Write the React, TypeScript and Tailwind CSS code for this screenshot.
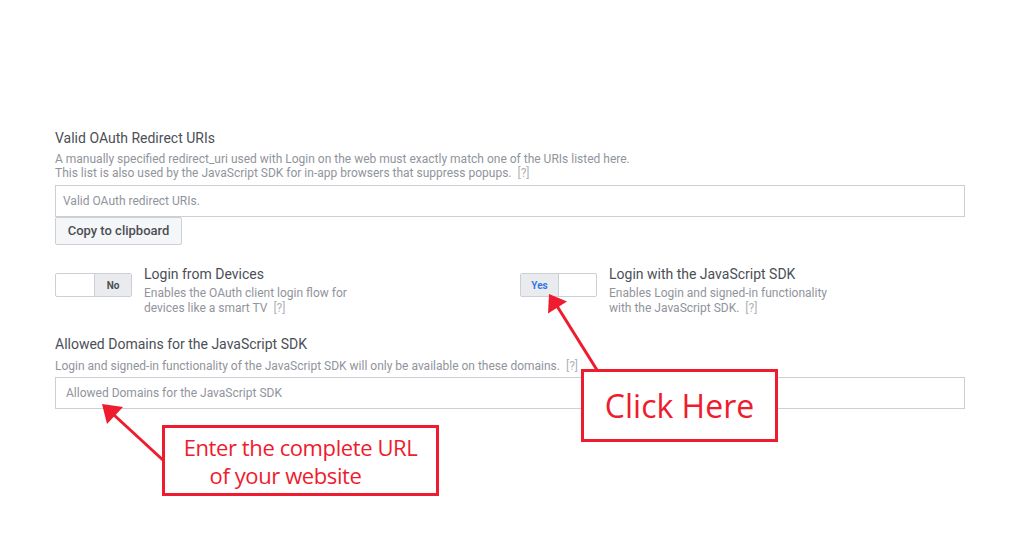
import React from "react";

const red = "#ee1c2e";

const Hint = () => <span className="ml-[6px] text-[#b0b3b8]">[?]</span>;

interface ToggleProps {
  on: boolean;
}
const Toggle = ({ on }: ToggleProps) => {
  return (
    <div className="mt-[8px] flex h-[24px] w-[77px] shrink-0 overflow-hidden rounded-[2px] border border-[#ccd0d5] bg-white">
      {on ? (
        <>
          <div className="flex w-[38px] items-center justify-center border-r border-[#ccd0d5] bg-[#e9ebee] text-[10px] font-bold text-[#3578e5]">
            Yes
          </div>
          <div className="flex-1" />
        </>
      ) : (
        <>
          <div className="flex-1" />
          <div className="flex w-[37px] items-center justify-center border-l border-[#ccd0d5] bg-[#e9ebee] text-[10px] font-bold text-[#4b4f56]">
            No
          </div>
        </>
      )}
    </div>
  );
};

interface SwitchRowProps {
  on: boolean;
  title: string;
  lines: [string, string];
}
const SwitchRow = ({ on, title, lines }: SwitchRowProps) => {
  return (
    <div className="flex gap-[12px]">
      <Toggle on={on} />
      <div>
        <div className="text-[14px] leading-[18px] text-[#4b4f56]">{title}</div>
        <div className="mt-[3px] text-[12px] leading-[15px] text-[#90949c]">
          {lines[0]}
          <br />
          {lines[1]}
          <Hint />
        </div>
      </div>
    </div>
  );
};

const Arrows = () => {
  return (
    <svg
      className="pointer-events-none absolute left-0 top-0"
      width="1024"
      height="550"
      viewBox="0 0 1024 550"
    >
      <line x1="597" y1="370" x2="557" y2="306" stroke={red} strokeWidth="3" />
      <polygon points="549,294 567,301.5 548,313.5" fill={red} />
      <line x1="164" y1="461" x2="114" y2="415" stroke={red} strokeWidth="3" />
      <polygon points="102,404 123,407 107,424" fill={red} />
    </svg>
  );
};

export default function App() {
  return (
    <div className="relative h-[550px] w-[1024px] overflow-hidden bg-white font-['Roboto',sans-serif]">
      <div className="ml-[55px] w-[910px] pt-[129px]">
        <div className="text-[14px] leading-[18px] text-[#4b4f56]">Valid OAuth Redirect URIs</div>
        <div className="mt-[5px] text-[12px] leading-[14px] text-[#90949c]">
          A manually specified redirect_uri used with Login on the web must exactly match one of the URIs listed here.
          <br />
          This list is also used by the JavaScript SDK for in-app browsers that suppress popups.
          <Hint />
        </div>
        <div className="mt-[5px] flex h-[32px] items-center border border-[#ccd0d5] px-[7px] text-[12px] text-[#90949c]">
          Valid OAuth redirect URIs.
        </div>
        <button className="flex h-[28px] w-[127px] items-center justify-center rounded-[2px] border border-[#ccd0d5] bg-[#f5f6f7] text-[13px] font-medium text-[#4b4f56]">
          Copy to clipboard
        </button>

        <div className="mt-[20px] flex">
          <div className="w-[465px]">
            <SwitchRow
              on={false}
              title="Login from Devices"
              lines={["Enables the OAuth client login flow for", "devices like a smart TV"]}
            />
          </div>
          <SwitchRow
            on={true}
            title="Login with the JavaScript SDK"
            lines={["Enables Login and signed-in functionality", "with the JavaScript SDK."]}
          />
        </div>

        <div className="mt-[19px] text-[14px] leading-[18px] text-[#4b4f56]">
          Allowed Domains for the JavaScript SDK
        </div>
        <div className="mt-[6px] text-[12px] leading-[14px] text-[#90949c]">
          Login and signed-in functionality of the JavaScript SDK will only be available on these domains.
          <Hint />
        </div>
        <div className="mt-[4px] flex h-[32px] items-center border border-[#ccd0d5] px-[10px] text-[12px] text-[#90949c]">
          Allowed Domains for the JavaScript SDK
        </div>
      </div>

      <Arrows />

      <div className="absolute left-[581px] top-[369px] flex h-[73px] w-[197px] items-center justify-center border-[3px] border-[#ee1c2e] bg-white font-['Open_Sans',sans-serif] text-[32px] text-[#ee1c2e]">
        Click Here
      </div>

      <div className="absolute left-[162px] top-[425px] flex h-[71px] w-[277px] flex-col items-center justify-center border-[3px] border-[#ee1c2e] bg-white font-['Open_Sans',sans-serif] text-[22px] leading-[28px] tracking-[-0.4px] text-[#ee1c2e]">
        <div>Enter the complete URL</div>
        <div className="pr-[30px]">of your website</div>
      </div>
    </div>
  );
}
